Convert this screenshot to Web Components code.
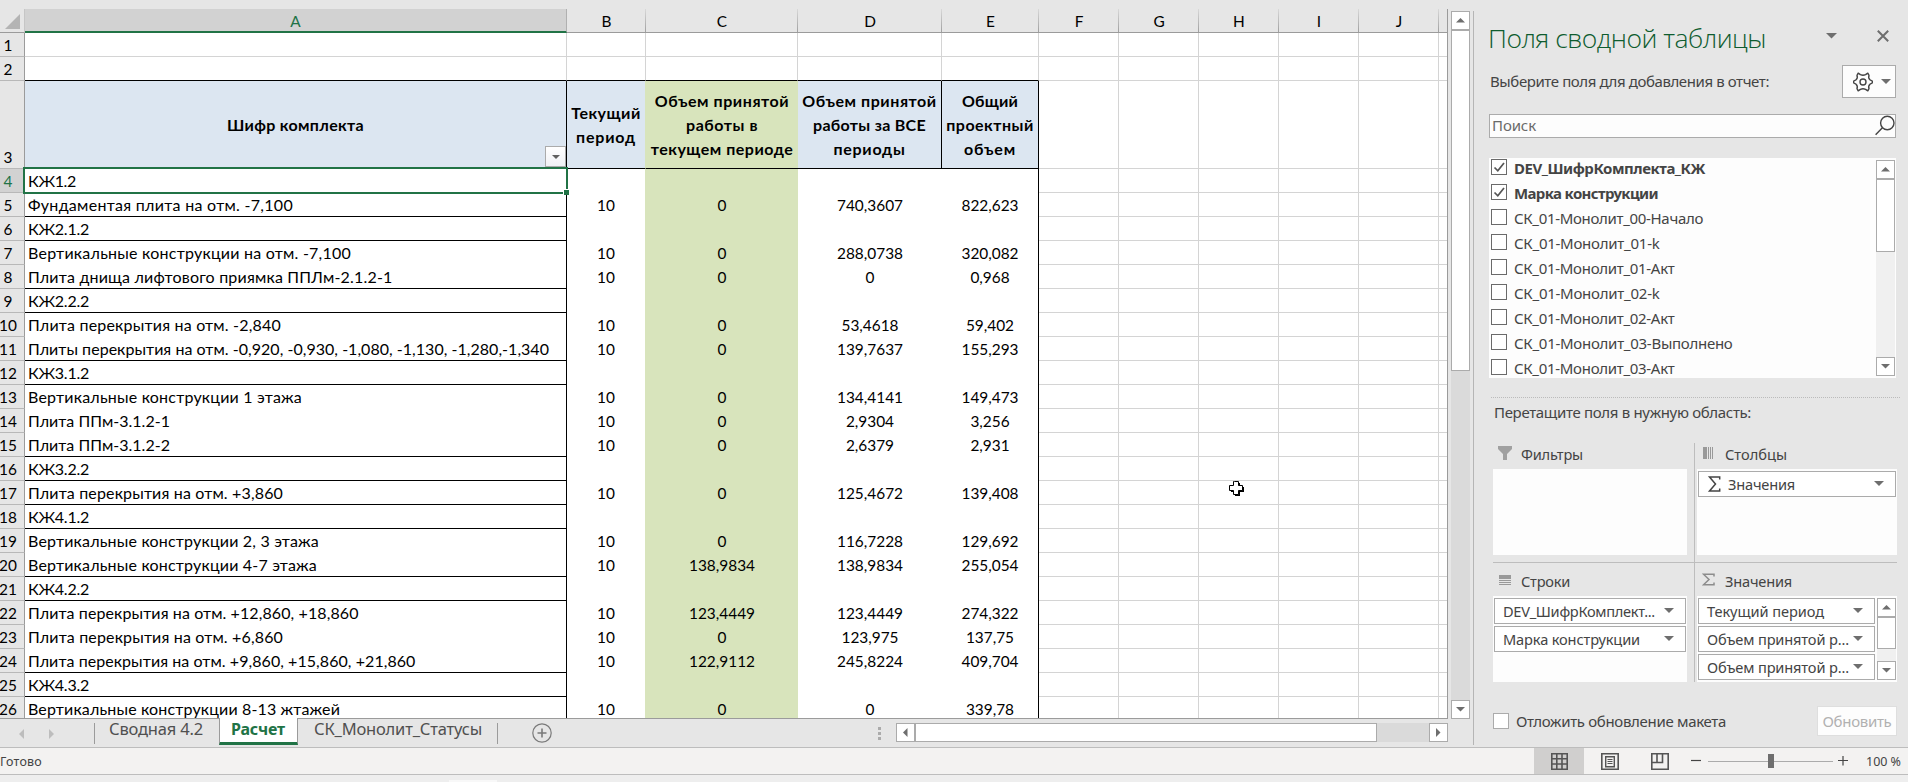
<!DOCTYPE html>
<html lang="ru">
<head>
<meta charset="utf-8">
<title>Расчет</title>
<style>
html,body{margin:0;height:100%;overflow:hidden;background:#e6e6e6}
body{font-family:"Noto Sans","Open Sans",sans-serif}
</style>
</head>
<body>
<excel-app></excel-app>
<script>
function define(name, html, setup) {
  customElements.define(name, class extends HTMLElement {
    connectedCallback() {
      if (this.shadowRoot) return;
      const root = this.attachShadow({mode: 'open'});
      root.innerHTML = typeof html === 'function' ? html(this) : html;
      if (setup) setup(this, root);
    }
  });
}

/* One line of text tracked to a given width */
define('fit-text', '<style>:host{display:inline-block;white-space:nowrap}</style><slot></slot>', el => {
  const w = parseFloat(el.getAttribute('w'));
  queueMicrotask(() => {
    const nat = el.getBoundingClientRect().width;
    const n = el.textContent.length;
    el.style.letterSpacing = ((w - nat) / n).toFixed(3) + 'px';
  });
});

/* Small solid triangle */
define('tri-icon', el => {
  const d = {
    up: '0,5 10,5 5,0', down: '0,0 10,0 5,5', left: '5,0 5,10 0,5', right: '0,0 0,10 5,5'
  }[el.getAttribute('dir') || 'down'];
  const side = /left|right/.test(el.getAttribute('dir'));
  const s = +(el.getAttribute('size') || 9);
  const w = side ? s / 2 : s, h = side ? s : s / 2;
  return `<style>:host{display:block;width:${w}px;height:${h}px}svg{display:block}</style>
  <svg width="${w}" height="${h}" viewBox="0 0 ${side ? '5 10' : '10 5'}" preserveAspectRatio="none"><polygon points="${d}" fill="currentColor"/></svg>`;
});

define('scroll-bar', el => {
  const v = !el.hasAttribute('horizontal');
  return `<style>
  :host{display:flex;flex-direction:${v ? 'column' : 'row'};background:var(--track,#dadada);color:#6e6e6e;box-sizing:border-box}
  .b{box-sizing:border-box;flex:none;display:grid;place-items:center;border:1px solid #ababab;background:#fff;width:19px;height:19px}
  .t{box-sizing:border-box;flex:none;border:1px solid #ababab;background:#fff;${v ? 'width:19px;margin-top:-1px;border-top-width:2px' : 'height:19px;margin-left:-1px;border-left-width:2px'};${v ? 'height' : 'width'}:${el.getAttribute('thumb')}px}
  .s{flex:1}
  </style><div class="b"><tri-icon dir="${v ? 'up' : 'left'}"></tri-icon></div><div class="t"></div><div class="s"></div><div class="b"><tri-icon dir="${v ? 'down' : 'right'}"></tri-icon></div>`;
});

const COLS = ['A','B','C','D','E','F','G','H','I','J'];
const ROWS = [
  ['КЖ1.2'],
  ['Фундаментая плита на отм. -7,100','10','0','740,3607','822,623'],
  ['КЖ2.1.2'],
  ['Вертикальные конструкции на отм. -7,100','10','0','288,0738','320,082'],
  ['Плита днища лифтового приямка ППЛм-2.1.2-1','10','0','0','0,968'],
  ['КЖ2.2.2'],
  ['Плита перекрытия на отм. -2,840','10','0','53,4618','59,402'],
  ['Плиты перекрытия на отм. -0,920, -0,930, -1,080, -1,130, -1,280,-1,340','10','0','139,7637','155,293'],
  ['КЖ3.1.2'],
  ['Вертикальные конструкции 1 этажа','10','0','134,4141','149,473'],
  ['Плита ППм-3.1.2-1','10','0','2,9304','3,256'],
  ['Плита ППм-3.1.2-2','10','0','2,6379','2,931'],
  ['КЖ3.2.2'],
  ['Плита перекрытия на отм. +3,860','10','0','125,4672','139,408'],
  ['КЖ4.1.2'],
  ['Вертикальные конструкции 2, 3 этажа','10','0','116,7228','129,692'],
  ['Вертикальные конструкции 4-7 этажа','10','138,9834','138,9834','255,054'],
  ['КЖ4.2.2'],
  ['Плита перекрытия на отм. +12,860, +18,860','10','123,4449','123,4449','274,322'],
  ['Плита перекрытия на отм. +6,860','10','0','123,975','137,75'],
  ['Плита перекрытия на отм. +9,860, +15,860, +21,860','10','122,9112','245,8224','409,704'],
  ['КЖ4.3.2'],
  ['Вертикальные конструкции 8-13 жтажей','10','0','0','339,78']
];
const WIDTHS = [48,265,61,323,364.5,61,253,521,61,274,142,142,61,255,61,291,289,61,330.5,255,387.5,61,312];
const HEAD = [[['Шифр комплекта',137]],[['Текущий',69.5],['период',60]],[['Объем принятой',134.5],['работы в',72],['текущем периоде',142.5]],[['Объем принятой',134.5],['работы за ВСЕ',113],['периоды',72]],[['Общий',56],['проектный',87.5],['объем',52]]];

define('sheet-grid', () => {
  let h = '<div class="r ch"><div class="rh"><svg width="15" height="15"><path d="M15 0V15H0Z" fill="#b4b4b4"/></svg></div>' +
    COLS.map(c => `<div class="c ${c}">${c}</div>`).join('') + '<div class="c K"></div></div>';
  const empty = cs => cs.map(c => `<div class="c g ${c}"></div>`).join('');
  for (const n of [1, 2]) h += `<div class="r${n === 2 ? ' pre' : ''}"><div class="rh"><b>${n}</b></div>${empty(COLS)}<div class="c g K"></div></div>`;
  h += '<div class="r head"><div class="rh"><b>3</b></div>' + HEAD.map((ls, i) =>
    `<div class="c h ${COLS[i]}">${ls.map(l => `<fit-text w="${l[1]}">${l[0]}</fit-text>`).join('')}${i ? '' : '<i class="f"><tri-icon size="8"></tri-icon></i>'}</div>`).join('') +
    empty(COLS.slice(5)) + '<div class="c g K"></div></div>';
  ROWS.forEach((r, i) => {
    const group = r.length === 1, next = ROWS[i + 1];
    const line = group || (next && next.length === 1);
    h += `<div class="r${i ? '' : ' sel'}"><div class="rh"><b>${i + 4}</b></div><div class="c A d${line ? ' ln' : ''}"><fit-text w="${WIDTHS[i]}">${r[0]}</fit-text>${i ? '' : '<i class="box"></i><i class="hd"></i>'}</div>` +
      ['B','C','D','E'].map((c, k) => `<div class="c d ${c}">${r[k + 1] || ''}</div>`).join('') + empty(COLS.slice(5)) + '<div class="c g K"></div></div>';
  });
  return `<style>
  :host{display:block;box-sizing:border-box;overflow:hidden;border-right:1px solid #9b9b9b;border-bottom:1px solid #9b9b9b;background:#fff;
    font:15.4px/23px Lato,sans-serif;color:#000}
  .r{display:grid;grid-template-columns:25px 542px 79px 152px 144px 97px repeat(5,80px) 8px;grid-template-rows:100%;height:24px}
  .rh{box-sizing:border-box;background:#e6e6e6;border-right:1px solid #9b9b9b;border-bottom:1px solid #b8b8b8;display:flex;align-items:flex-end}
  .rh b{font-weight:400;width:16px;display:flex;justify-content:center;white-space:nowrap;height:22px}
  .c{box-sizing:border-box;min-height:0;height:100%;position:relative;text-align:center;white-space:nowrap;padding-top:1px}
  .g{border-right:1px solid #d4d4d4;border-bottom:1px solid #d4d4d4}
  .K{border-right:0}
  .ch .c{background:linear-gradient(to bottom,#d8d8d8,#a0a0a0) right/1px 100% no-repeat #e6e6e6;border-bottom:1px solid #9b9b9b;padding-top:1px;line-height:22px}
  .ch .K{background:#e6e6e6}
  .ch .rh{border-bottom-color:#9b9b9b;border-right-color:#c6c6c6;padding:0 0 3px 5px}
  .ch .A{background:#d2d2d2;border-bottom:2px solid #217346;color:#217346;border-right:1px solid #b0b0b0}
  .pre .A,.pre .B,.pre .C,.pre .D,.pre .E{border-bottom-color:#000}
  .head{height:88px}
  .h{background:#dce6f1;border-bottom:1px solid #000;display:flex;flex-direction:column;align-items:center;justify-content:center;font-weight:700;font-size:16px;line-height:24px;padding:0}
  .h.A,.h.D,.h.E{border-right:1px solid #000}
  .h.B,.d.B{border-right:1px solid #d8e4bc}
  .h.C,.d.C{background:#d8e4bc}
  .d.E{border-right:1px solid #000}
  .d.A{border-right:1px solid #000;text-align:left;padding:0 0 0 3px;font-size:16px}
  .d.ln{border-bottom:1px solid #000}
  .sel .rh{background:#d2d2d2;color:#217346}
  .f{position:absolute;right:0;bottom:1px;box-sizing:border-box;width:21px;height:21px;border:1px solid #ababab;background:linear-gradient(#fff,#f0f1f5);display:grid;place-items:center;color:#606060}
  .box{position:absolute;left:-2px;top:-2px;right:-2px;bottom:-2px;border:2px solid #217346;z-index:1}
  .hd{position:absolute;right:-3px;bottom:-3px;width:5px;height:5px;background:#217346;border:1px solid #fff;border-width:1px 0 0 1px;z-index:2}
  </style>${h}`;
});

define('sheet-tabs', () => `<style>
  :host{display:flex;height:29px;box-sizing:border-box;font-size:16.5px;line-height:24px;color:#505050}
  .nav{width:94px;display:flex;gap:25px;padding:10px 0 0 19px;box-sizing:border-box;color:#bdbdbd}
  .t,.z{box-sizing:border-box;margin-top:4px;height:21px;line-height:12px}
  .t{padding-left:14px;border-left:1px solid #9b9b9b;width:125px}
  .a{box-sizing:border-box;margin-top:-1px;height:27px;width:79px;background:#fff;border:1px solid #9b9b9b;border-width:0 1px 3px;border-bottom-color:#217346;color:#217346;font-weight:700;padding-left:11px;font-size:16px;line-height:23px}
  .z{width:200px;padding-left:16px;border-right:1px solid #9b9b9b}
  .plus{margin:4px 0 0 34px;width:20px;height:20px}
  .dots{margin:8px 15px 0 326px;width:3px;height:13px;display:flex;flex-direction:column;gap:2px}
  .dots i{width:3px;height:3px;background:#ababab}
  scroll-bar{margin-top:4px;width:552px;height:19px}
  </style>
  <div class="nav"><tri-icon dir="left" size="10"></tri-icon><tri-icon dir="right" size="10"></tri-icon></div>
  <div class="t"><fit-text w="94">Сводная 4.2</fit-text></div>
  <div class="a"><fit-text w="54">Расчет</fit-text></div>
  <div class="z"><fit-text w="168">СК_Монолит_Статусы</fit-text></div>
  <svg class="plus" viewBox="0 0 20 20" fill="none" stroke="#7a7a7a"><circle cx="10" cy="10" r="9.2" stroke-width="1.2"/><path d="M10 5.5V14.5M5.5 10H14.5" stroke-width="1.6"/></svg>
  <div class="dots"><i></i><i></i><i></i></div>
  <scroll-bar horizontal thumb="463"></scroll-bar>`);

define('field-row', el => `<style>
  :host{display:flex;height:25px;line-height:21px;font-size:15px;color:#444;font-weight:${el.hasAttribute('on') ? 700 : 400}}
  .k{flex:none;box-sizing:border-box;width:16px;height:16px;margin:1px 7px 0 2px;border:1px solid #6a6a6a;background:#fff}
  svg{display:block}
  </style><div class="k">${el.hasAttribute('on') ? '<svg width="14" height="14" fill="none" stroke="#555" stroke-width="1.7"><path d="M2.5 7.5L5.8 10.8L12 3"/></svg>' : ''}</div><fit-text w="${el.getAttribute('w')}"></fit-text>`,
  (el, root) => { const f = root.querySelector('fit-text'); f.textContent = el.textContent; });

define('field-pill', el => `<style>
  :host{box-sizing:border-box;display:flex;align-items:center;justify-content:space-between;height:26px;line-height:24px;border:1px solid #ababab;background:#fff;color:#444;font-size:14.6px;padding:0 11px 0 8px}
  .l{display:flex;align-items:center;gap:7px}
  tri-icon{color:#6e6e6e;margin-top:-2px}
  </style><div class="l"><slot name="icon"></slot><fit-text w="${el.getAttribute('w')}">${el.textContent.trim()}</fit-text></div><tri-icon size="10"></tri-icon>`);

define('drop-zone', el => {
  const icon = {
    filter: '<path d="M0 0H14V3L9 8V14H5V8L0 3Z" fill="#a0a0a0"/>',
    cols: '<path d="M1 1H5V13H1ZM6 1H7V13H6ZM8 1H9V13H8ZM10 1H11V13H10Z" fill="#999"/>',
    rows: '<path d="M1 2H13V6H1ZM1 7H13V8H1ZM1 9H13V10H1ZM1 11H13V12H1Z" fill="#999"/>',
    sum: '<path d="M12 3.5V1.2H1.5L7 6.5L1.5 11.8H12V9.5" fill="none" stroke="#8c8c8c" stroke-width="1.5"/>'
  }[el.getAttribute('icon')];
  return `<style>
  :host{display:flex;flex-direction:column;font-size:14.6px;color:#444}
  .t{display:flex;height:26px;line-height:22px;gap:9px;padding-left:5px}
  .t svg{flex:none;margin-top:3px}
  .b{box-sizing:border-box;background:#fdfdfd;height:86px;padding:2px 1px;display:flex;gap:2px}
  .l{flex:1;display:flex;flex-direction:column;gap:2px}
  scroll-bar{height:82px;--track:#f0f0f0}
  </style><div class="t"><svg width="14" height="14">${icon}</svg><fit-text w="${el.getAttribute('w')}">${el.getAttribute('label')}</fit-text></div>
  <div class="b"><div class="l"><slot></slot></div>${el.hasAttribute('scroll') ? '<scroll-bar thumb="33"></scroll-bar>' : ''}</div>`;
});

define('pivot-pane', () => `<style>
  :host{display:block;box-sizing:border-box;border-left:1px solid #b5b5b5;margin-top:11px;height:734px;padding-left:15px;color:#444;font-size:15px}
  .top{display:flex;height:54px;box-sizing:border-box;padding-top:9px;line-height:36px}
  .title{font:26.5px/36px "Open Sans","Noto Sans",sans-serif;font-weight:300;color:#0e5c2f;width:338px;margin-left:-1px}
  .top tri-icon{color:#6e6e6e;margin-top:13px}
  .x{margin:10px 0 0 40px}
  .sub{display:flex;height:33px;width:407px;justify-content:space-between;line-height:33px}
  .gear{box-sizing:border-box;width:54px;height:33px;border:1px solid #ababab;background:#fdfdfd;display:flex;align-items:center;padding-left:10px;gap:8px;color:#6e6e6e}
  .find{box-sizing:border-box;width:407px;height:24px;margin-top:16px;border:1px solid #ababab;background:#fdfdfd;color:#6a6a6a;display:flex;justify-content:space-between;line-height:20px;padding-left:2px}
  .list{margin-top:20px;width:407px;height:220px;background:#fdfdfd;display:flex;justify-content:space-between;overflow:hidden}
  .list scroll-bar{margin:2px 1px 0 0;height:216px;--track:#f0f0f0}
  .dot{margin:19px 0 0 2px;width:409px;border-top:1px dotted #bbb}
  .drag{margin:1px 0 0 5px;line-height:26px;height:43px}
  .z{margin-left:4px;width:404px;display:grid;grid-template-columns:194px 7px 1px 2px 200px;grid-template-rows:120px 120px}
  .z .v{grid-area:1/3/3/4;background:#bdbdbd;height:239px;margin-top:1px}
  .z .p{grid-column:1}.z .q{grid-column:5}
  .z .hl{grid-area:2/1/3/6;height:1px;background:#bdbdbd}
  .z drop-zone{grid-row:1}.z .r2{grid-row:2;margin-top:8px}
  .z .r1{margin-top:1px}
  .bot{display:flex;margin:24px 0 0 4px;width:404px;line-height:30px;height:30px}
  .k{flex:none;box-sizing:border-box;width:16px;height:16px;margin:7px 7px 0 0;border:1px solid #ababab;background:#fff}
  .u{margin-left:auto;box-sizing:border-box;width:80px;height:30px;border:1px solid #dedede;background:#fdfdfd;color:#b1b1b1;text-align:center;line-height:28px}
  </style>
  <div class="top"><div class="title"><fit-text w="278">Поля сводной таблицы</fit-text></div><tri-icon size="11"></tri-icon>
    <svg class="x" width="12" height="12" stroke="#6e6e6e" stroke-width="2"><path d="M.8.8L11.2 11.2M11.2.8L.8 11.2"/></svg></div>
  <div class="sub"><fit-text w="280" style="padding-left:1px">Выберите поля для добавления в отчет:</fit-text>
    <div class="gear"><svg width="20" height="20" viewBox="0 0 20 20" fill="none" stroke="#444" stroke-width="1.4" stroke-linejoin="round"><circle cx="10" cy="10" r="3"/><path d="M5.2 1.2L7.4 2.7Q10 3.8 12.6 2.7L14.8 1.2L16 3.4Q15 6 17 7.8L19.3 9V11L17 12.2Q15 14 16 16.6L14.8 18.8L12.6 17.3Q10 16.2 7.4 17.3L5.2 18.8L4 16.6Q5 14 3 12.2L.7 11V9L3 7.8Q5 6 4 3.4Z"/></svg><tri-icon size="10"></tri-icon></div></div>
  <div class="find"><fit-text w="44">Поиск</fit-text><svg width="20" height="22" fill="none" stroke="#444" stroke-width="1.4"><circle cx="12.3" cy="8" r="6.7"/><path d="M7.4 12.8L.6 19.8"/></svg></div>
  <div class="list"><div>
    <field-row on w="191">DEV_ШифрКомплекта_КЖ</field-row><field-row on w="144">Марка конструкции</field-row>
    <field-row w="189">СК_01-Монолит_00-Начало</field-row><field-row w="145.5">СК_01-Монолит_01-k</field-row>
    <field-row w="160.5">СК_01-Монолит_01-Акт</field-row><field-row w="145.5">СК_01-Монолит_02-k</field-row>
    <field-row w="160.5">СК_01-Монолит_02-Акт</field-row><field-row w="218.5">СК_01-Монолит_03-Выполнено</field-row>
    <field-row w="160.5" style="height:20px">СК_01-Монолит_03-Акт</field-row></div><scroll-bar thumb="74"></scroll-bar></div>
  <div class="dot"></div>
  <div class="drag"><fit-text w="257">Перетащите поля в нужную область:</fit-text></div>
  <div class="z">
    <drop-zone class="p r1" icon="filter" label="Фильтры" w="62"></drop-zone>
    <drop-zone class="q r1" icon="cols" label="Столбцы" w="62"><field-pill w="67">Значения<svg slot="icon" width="14" height="16" fill="none" stroke="#444" stroke-width="1.5"><path d="M12.7 3.5V1H2.5L8.5 8L2.5 15H12.7V12.5"/></svg></field-pill></drop-zone>
    <div class="v"></div><div class="hl"></div>
    <drop-zone class="p r2" icon="rows" label="Строки" w="49"><field-pill w="152">DEV_ШифрКомплект...</field-pill><field-pill w="137">Марка конструкции</field-pill></drop-zone>
    <drop-zone class="q r2" icon="sum" label="Значения" w="67" scroll><field-pill w="117">Текущий период</field-pill><field-pill w="142">Объем принятой р...</field-pill><field-pill w="142">Объем принятой р...</field-pill></drop-zone>
  </div>
  <div class="bot"><div class="k"></div><fit-text w="210">Отложить обновление макета</fit-text><div class="u"><fit-text w="69">Обновить</fit-text></div></div>`);

define('status-bar', () => `<style>
  :host{display:flex;box-sizing:border-box;height:28px;border:1px solid #bdbdbd;border-width:1px 0;background:#f3f2f1;color:#444;font-size:12.5px;line-height:27px}
  .s{flex:1}
  .v{width:50px;display:grid;place-items:center}
  .v+.v{padding-left:1px;width:49px}
  .on{background:#d0cfce}
  .zoom{display:flex;align-items:center;margin-left:7px}
  .tr{position:relative;width:125px;height:1px;background:#ababab;margin:0 5px 0 7px}
  .tr i{position:absolute;left:60px;top:-7px;width:6px;height:14px;background:#6e6e6e}
  .pc{width:42px;margin-left:18px}
  svg{display:block}
  </style><fit-text w="42">Готово</fit-text><div class="s"></div>
  <div class="v on"><svg width="17" height="17" fill="none" stroke="#555" stroke-width="1.6"><path d="M.8.8H16.2V16.2H.8ZM.8 5.8H16.2M.8 11H16.2M5.8.8V16.2M11 .8V16.2"/></svg></div>
  <div class="v"><svg width="18" height="17" fill="none" stroke="#555"><path d="M.8.8H17.2V16.2H.8Z" stroke-width="1.6"/><path d="M4.7 3.7H13.3V13.8H4.7Z" stroke-width="1.4"/><path d="M6.5 6.5H11.5M6.5 8.5H11.5M6.5 10.5H11.5"/></svg></div>
  <div class="v"><svg width="18" height="17" fill="none" stroke="#555" stroke-width="1.6"><path d="M.8.8H17.2V16.2H.8ZM.8 9.5H11.5V.8M6 .8V9.5"/></svg></div>
  <div class="zoom"><svg width="10" height="10" stroke="#444" stroke-width="1.2"><path d="M0 4.5H10"/></svg><div class="tr"><i></i></div><svg width="10" height="10" stroke="#444" stroke-width="1.2"><path d="M0 4.5H10M5 0V9.5"/></svg><div class="pc"><fit-text w="35">100 %</fit-text></div></div>`);

define('excel-app', `<style>
  :host{display:grid;grid-template-columns:1473px 435px;grid-template-rows:747px 28px 7px;width:1908px;height:782px;background:#e6e6e6;position:relative;overflow:hidden}
  .l{display:grid;grid-template-columns:1448px 19px;column-gap:3px;grid-template-rows:9px 710px 28px}
  sheet-grid{grid-area:2/1;height:710px}
  .l>scroll-bar{grid-area:2/2;margin-top:2px;height:708px}
  sheet-tabs{grid-area:3/1/4/3}
  status-bar{grid-column:1/3}
  .f{grid-column:1/3;background:#eee;padding-left:449px}
  .f i{display:block;width:48px;height:2px;margin-top:5px;background:#f8f8f8}
  .cur{position:absolute;left:1228px;top:480px}
  </style>
  <div class="l"><sheet-grid></sheet-grid><scroll-bar thumb="342"></scroll-bar><sheet-tabs></sheet-tabs></div>
  <pivot-pane></pivot-pane><status-bar></status-bar><div class="f"><i></i></div>
  <svg class="cur" width="18" height="18"><path d="M7 3H12V7H16V12H12V16H7V12H3V7H7Z"/><path d="M6.5 1.5H10.5V5.5H14.5V10.5H10.5V14.5H5.5V10.5H1.5V5.5H5.5V1.5Z" fill="#fff" stroke="#000"/></svg>`);
</script>
</body>
</html>
